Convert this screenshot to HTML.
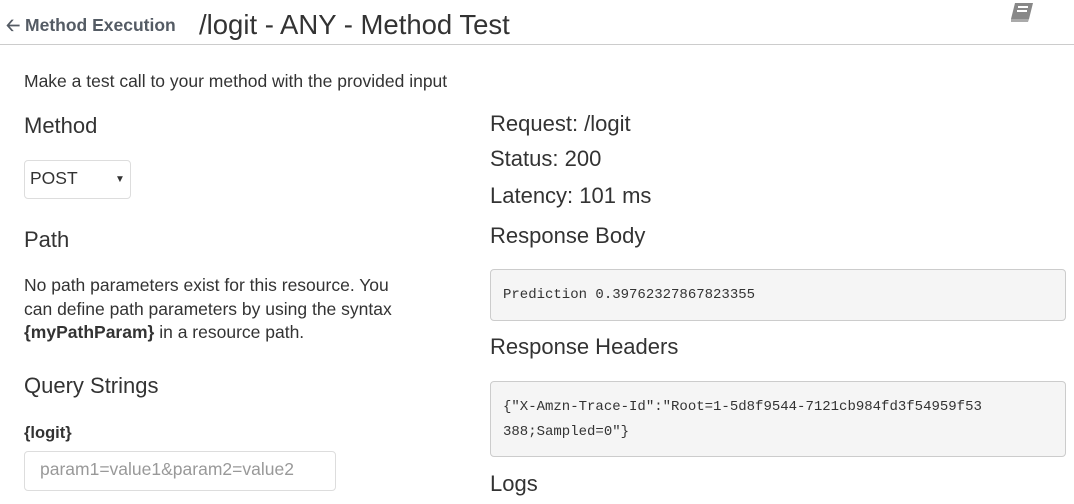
<!DOCTYPE html>
<html><head><style>
body{margin:0;width:1074px;height:504px;overflow:hidden;background:#fff;font-family:"Liberation Sans",sans-serif;color:#333;position:relative}
.a{position:absolute;white-space:nowrap;line-height:1}
.h{font-size:22px;color:#333}
.box{position:absolute;left:490px;width:576px;background:#f5f5f5;border:1px solid #ccc;border-radius:4px;box-sizing:border-box;font-family:"Liberation Mono",monospace;font-size:14px;color:#333;padding:0 12px;line-height:25px}
</style></head><body>
<div class="a" style="left:6px;top:17px;font-size:17.5px;font-weight:bold;color:#545b64">&#129120; Method Execution</div>
<div class="a" style="left:199px;top:11px;font-size:27.5px;color:#333">/logit - ANY - Method Test</div>
<svg style="position:absolute;left:1008px;top:2px" width="28" height="22" viewBox="0 0 28 22"><path d="M7 1h18l-4 16H3z" fill="#888"/><path d="M3 17h18l-1 3H3z" fill="#aaa"/><rect x="10" y="4" width="10" height="2" fill="#fff"/><rect x="9" y="8" width="10" height="2" fill="#fff"/></svg>
<div style="position:absolute;left:0;top:44px;width:1074px;height:1px;background:#ccc"></div>
<div class="a" style="left:24px;top:73px;font-size:17.5px">Make a test call to your method with the provided input</div>
<div class="a h" style="left:24px;top:115px">Method</div>
<div style="position:absolute;left:24px;top:160px;width:107px;height:39px;border:1px solid #ddd;border-radius:4px;box-sizing:border-box"></div>
<div class="a" style="left:30px;top:170px;font-size:17.5px">POST</div>
<div class="a" style="left:115px;top:175px;font-size:10px">▼</div>
<div class="a h" style="left:24px;top:229px">Path</div>
<div style="position:absolute;left:24px;top:274px;font-size:17.5px;line-height:23.5px;width:380px">No path parameters exist for this resource. You can define path parameters by using the syntax <b>{myPathParam}</b> in a resource path.</div>
<div class="a h" style="left:24px;top:375px">Query Strings</div>
<div class="a" style="left:24px;top:425px;font-size:16.5px;font-weight:bold">{logit}</div>
<div style="position:absolute;left:24px;top:451px;width:312px;height:40px;border:1px solid #ddd;border-radius:4px;box-sizing:border-box"></div>
<div class="a" style="left:40px;top:461px;font-size:17.5px;color:#999">param1=value1&amp;param2=value2</div>
<div class="a h" style="left:490px;top:113px">Request: /logit</div>
<div class="a h" style="left:490px;top:148px">Status: 200</div>
<div class="a h" style="left:490px;top:185px">Latency: 101 ms</div>
<div class="a h" style="left:490px;top:225px">Response Body</div>
<div class="box" style="top:269px;height:52px;padding-top:13px">Prediction 0.39762327867823355</div>
<div class="a h" style="left:490px;top:336px">Response Headers</div>
<div class="box" style="top:381px;height:76px;padding-top:13px">{"X-Amzn-Trace-Id":"Root=1-5d8f9544-7121cb984fd3f54959f53<br>388;Sampled=0"}</div>
<div class="a h" style="left:490px;top:473px">Logs</div>
</body></html>
